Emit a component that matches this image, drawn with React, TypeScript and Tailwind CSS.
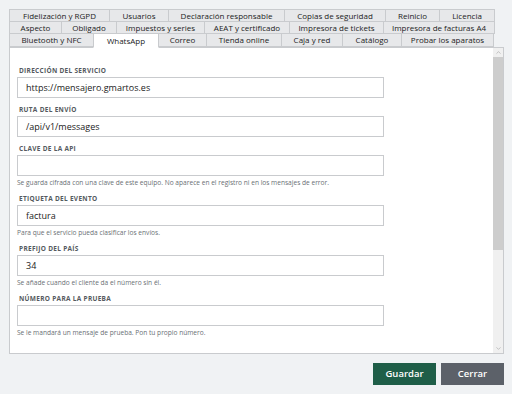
import { ChevronUp, ChevronDown } from 'lucide-react';

type Tab = { label: string; w: number; active?: boolean };

const rows: Tab[][] = [
  [
    { label: 'Fidelización y RGPD', w: 101 },
    { label: 'Usuarios', w: 60 },
    { label: 'Declaración responsable', w: 117 },
    { label: 'Copias de seguridad', w: 102 },
    { label: 'Reinicio', w: 55 },
    { label: 'Licencia', w: 56 },
  ],
  [
    { label: 'Aspecto', w: 53 },
    { label: 'Obligado', w: 56 },
    { label: 'Impuestos y series', w: 89 },
    { label: 'AEAT y certificado', w: 86 },
    { label: 'Impresora de tickets', w: 95 },
    { label: 'Impresora de facturas A4', w: 112 },
  ],
  [
    { label: 'Bluetooth y NFC', w: 85 },
    { label: 'WhatsApp', w: 66, active: true },
    { label: 'Correo', w: 49 },
    { label: 'Tienda online', w: 76 },
    { label: 'Caja y red', w: 62 },
    { label: 'Catálogo', w: 60 },
    { label: 'Probar los aparatos', w: 93 },
  ],
];

type Field = { label: string; value?: string; help?: string };

const fields: Field[] = [
  { label: 'Dirección del servicio', value: 'https://mensajero.gmartos.es' },
  { label: 'Ruta del envío', value: '/api/v1/messages' },
  {
    label: 'Clave de la API',
    help: 'Se guarda cifrada con una clave de este equipo. No aparece en el registro ni en los mensajes de error.',
  },
  { label: 'Etiqueta del evento', value: 'factura', help: 'Para que el servicio pueda clasificar los envíos.' },
  { label: 'Prefijo del país', value: '34', help: 'Se añade cuando el cliente da el número sin él.' },
  { label: 'Número para la prueba', help: 'Se le mandará un mensaje de prueba. Pon tu propio número.' },
];

function TabRow({ tabs, last }: { tabs: Tab[]; last?: boolean }) {
  return (
    <div className={`flex ${last ? 'relative z-10 h-[14px]' : 'h-[13px]'}`}>
      {tabs.map((t, i) => (
        <div
          key={t.label}
          style={{ width: t.w }}
          className={`flex items-center justify-center border border-[#c9cbce] text-[8px] leading-none text-[#222] ${
            i > 0 ? '-ml-px' : ''
          } ${t.active ? 'h-[15px] border-b-white bg-white' : 'bg-[#e7e8ea]'}`}
        >
          {t.label}
        </div>
      ))}
    </div>
  );
}

function FormField({ f }: { f: Field }) {
  return (
    <div className={f.help ? 'mb-[4px]' : 'mb-[6px]'}>
      <div className="pl-[2px] text-[6.5px] font-bold uppercase leading-[12px] tracking-[0.3px] text-[#555a60]">
        {f.label}
      </div>
      <div className="flex h-[21px] w-[367px] items-center border border-[#c9cbce] bg-white px-[8px] text-[9px] text-[#222]">
        {f.value}
      </div>
      {f.help && <div className="mt-px text-[6.6px] leading-[12px] text-[#6a6f75]">{f.help}</div>}
    </div>
  );
}

export default function App() {
  return (
    <div className="h-[416px] w-[520px] bg-white font-['Open_Sans',sans-serif]">
      <div className="flex h-[394px] w-[512px] flex-col bg-[#f0f2f4] pl-[9px] pt-[9px]">
        {/* settings tabs, three stacked rows */}
        <div className="flex flex-col [&>*+*]:-mt-px">
          {rows.map((r, i) => (
            <TabRow key={i} tabs={r} last={i === rows.length - 1} />
          ))}
        </div>

        <div className="flex h-[307px] w-[495px] border border-[#c9cbce] bg-white">
          <div className="flex-1 overflow-hidden pl-[7px] pt-[17px]">
            {fields.map((f) => (
              <FormField key={f.label} f={f} />
            ))}
          </div>
          <div className="flex w-[10px] flex-col bg-[#f0f0f0]">
            <div className="flex h-[9px] items-center justify-center text-[#a0a0a0]">
              <ChevronUp size={7} strokeWidth={2} />
            </div>
            <div className="h-[193px] bg-[#cdcdcd]" />
            <div className="flex-1" />
            <div className="flex h-[9px] items-center justify-center text-[#a0a0a0]">
              <ChevronDown size={7} strokeWidth={2} />
            </div>
          </div>
        </div>

        <div className="mt-[9px] flex w-[495px] justify-end gap-[5px]">
          <button className="h-[22px] w-[63px] bg-[#1f5e48] text-[9.5px] font-semibold text-white">Guardar</button>
          <button className="h-[22px] w-[63px] bg-[#5c6169] text-[9.5px] font-semibold text-white">Cerrar</button>
        </div>
      </div>
    </div>
  );
}
